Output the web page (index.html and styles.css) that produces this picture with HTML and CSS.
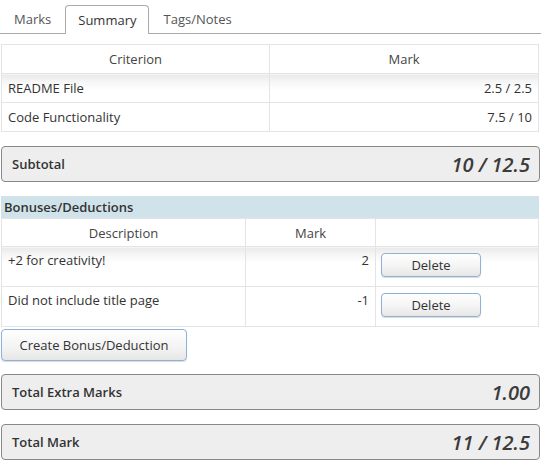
FILE: index.html
```html
<!DOCTYPE html>
<html>
<head>
<meta charset="utf-8">
<link rel="stylesheet" href="styles.css">
</head>
<body>
<div class="page">
  <div class="tabs">
    <div class="tab">Marks</div>
    <div class="tab active">Summary</div>
    <div class="tab">Tags/Notes</div>
  </div>

  <table class="grid criteria">
    <thead>
      <tr><th class="c1">Criterion</th><th>Mark</th></tr>
    </thead>
    <tbody>
      <tr><td>README File</td><td class="num">2.5 / 2.5</td></tr>
      <tr><td>Code Functionality</td><td class="num">7.5 / 10</td></tr>
    </tbody>
  </table>

  <div class="total first">
    <span class="label">Subtotal</span>
    <span class="value">10 / 12.5</span>
  </div>

  <div class="section-title">Bonuses/Deductions</div>
  <table class="grid extras">
    <thead>
      <tr><th class="d1">Description</th><th class="d2">Mark</th><th></th></tr>
    </thead>
    <tbody>
      <tr><td>+2 for creativity!</td><td class="num">2</td><td class="act"><button class="btn del">Delete</button></td></tr>
      <tr><td>Did not include title page</td><td class="num">-1</td><td class="act"><button class="btn del">Delete</button></td></tr>
    </tbody>
  </table>
  <button class="btn create">Create Bonus/Deduction</button>

  <div class="total extra">
    <span class="label">Total Extra Marks</span>
    <span class="value">1.00</span>
  </div>
  <div class="total final">
    <span class="label">Total Mark</span>
    <span class="value">11 / 12.5</span>
  </div>
</div>
</body>
</html>
```

FILE: styles.css
```css
* { box-sizing: border-box; }
html, body { margin: 0; padding: 0; background: #fff; }
body {
  font-family: "Open Sans", "Liberation Sans", sans-serif;
  font-size: 13px;
  color: #333;
}
.page { width: 541px; padding: 0 1px; }

.tabs {
  display: flex;
  align-items: flex-end;
  gap: 2px;
  height: 34px;
  border-bottom: 1px solid #aaa;
  margin: 0 -1px;
  padding-left: 1px;
}
.tab {
  height: 28px;
  line-height: 26px;
  padding: 0 11px 0 12px;
  color: #555;
  border: 1px solid transparent;
  border-bottom: none;
}
.tab.active {
  color: #333;
  border-color: #aaa;
  border-radius: 4px 4px 0 0;
  background: #fff;
  margin-bottom: -1px;
  height: 29px;
  padding-top: 1px;
}

.grid {
  width: 538px;
  border-collapse: collapse;
  table-layout: fixed;
}
.grid th, .grid td {
  border: 1px solid #e4e4e4;
  font-weight: normal;
  padding: 0 6px;
}
.grid th { text-align: center; color: #444; }
.criteria { margin-top: 10px; }
.criteria th { height: 29px; }
.criteria td { height: 29px; }
.criteria .c1 { width: 268px; }
.grid tbody tr:first-child td {
  background: linear-gradient(to bottom, #e9e9e9 0px, #f7f7f7 8px, #fff 16px);
}
.num { text-align: right; }

.total {
  display: flex;
  justify-content: space-between;
  align-items: center;
  height: 36px;
  border: 1px solid #888;
  border-radius: 4px;
  background: #eee;
  padding: 0 9px 0 10px;
}
.total .label { font-weight: 600; color: #333; }
.total .value { font-style: italic; font-weight: 600; font-size: 20px; color: #3c3c3c; }
.total.first { margin-top: 14px; }
.total.extra { margin-top: 13px; }
.total.final { margin-top: 14px; }

.section-title {
  margin-top: 14px;
  height: 22px;
  line-height: 22px;
  background: #d0e3ea;
  font-weight: 600;
  padding-left: 3px;
  width: 538px;
}
.extras th { height: 28px; }
.extras td { height: 40px; vertical-align: top; padding-top: 4px; }
.extras .d1 { width: 244px; }
.extras .d2 { width: 130px; }
.extras td.act { padding: 6px 5px 0 5px; }

.btn {
  font-family: "Open Sans", "Liberation Sans", sans-serif;
  font-size: 13px;
  color: #333;
  background: linear-gradient(to bottom, #fff 0%, #f3f3f3 60%, #e6e6e6 100%);
  border: 1px solid #8fb0d8;
  border-radius: 4px;
  box-shadow: 0 1px 1px rgba(0,0,0,0.15);
  cursor: pointer;
}
.btn.del { width: 100px; height: 24px; padding: 0; display: block; }
.btn.create {
  display: block;
  margin-top: 2px;
  width: 186px;
  height: 32px;
  padding: 0;
}
```
